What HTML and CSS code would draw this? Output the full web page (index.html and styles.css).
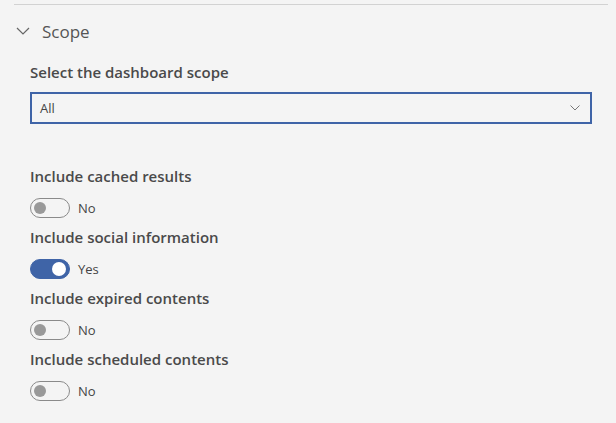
FILE: index.html
```html
<!doctype html>
<html lang="en">
    <head>
        <meta charset="UTF-8" />
        <meta name="viewport" content="width=device-width, initial-scale=1.0" />
        <title>Scope</title>
        <link rel="stylesheet" href="styles.css">
    </head>
    <body>
        <div class="divider"></div>

        <div class="section-header">
            <svg class="chevron" width="14" height="8" viewBox="0 0 14 8">
                <path d="M1 1 L7 7 L13 1" fill="none" stroke="#666" stroke-width="1.2" />
            </svg>
            <span class="section-title">Scope</span>
        </div>

        <div class="section-body">
            <label class="field-label" for="scope">Select the dashboard scope</label>
            <div class="select">
                <span class="select-value">All</span>
                <svg class="select-arrow" width="10" height="6" viewBox="0 0 10 6">
                    <path d="M0.5 0.5 L5 5 L9.5 0.5" fill="none" stroke="#777" stroke-width="1" />
                </svg>
            </div>

            <div class="toggles">
                <div class="field">
                    <div class="field-label">Include cached results</div>
                    <div class="toggle-row">
                        <span class="toggle"><span class="knob"></span></span>
                        <span class="toggle-text">No</span>
                    </div>
                </div>
                <div class="field">
                    <div class="field-label">Include social information</div>
                    <div class="toggle-row">
                        <span class="toggle on"><span class="knob"></span></span>
                        <span class="toggle-text">Yes</span>
                    </div>
                </div>
                <div class="field">
                    <div class="field-label">Include expired contents</div>
                    <div class="toggle-row">
                        <span class="toggle"><span class="knob"></span></span>
                        <span class="toggle-text">No</span>
                    </div>
                </div>
                <div class="field">
                    <div class="field-label">Include scheduled contents</div>
                    <div class="toggle-row">
                        <span class="toggle"><span class="knob"></span></span>
                        <span class="toggle-text">No</span>
                    </div>
                </div>
            </div>
        </div>
    </body>
</html>
```
FILE: styles.css
```css
body {
    margin: 0;
    background-color: #f4f4f4;
    font-family: "Open Sans", "Noto Sans", sans-serif;
    color: #444;
}
.divider {
    margin: 4px 8px 0 14px;
    border-top: 1px solid #d2d2d2;
}
.section-header {
    display: flex;
    align-items: center;
    height: 30px;
    margin-top: 11px;
    padding-left: 16px;
}
.chevron {
    margin-right: 12px;
}
.section-title {
    font-size: 17px;
    color: #555;
}
.section-body {
    padding: 0 24px 0 30px;
}
.field-label {
    display: block;
    font-size: 15px;
    font-weight: 600;
    color: #4a4a4a;
    line-height: 20px;
}
.section-body > .field-label {
    margin-top: 16px;
}
.select {
    display: flex;
    align-items: center;
    justify-content: space-between;
    height: 28px;
    margin-top: 10px;
    padding: 0 10px 0 8px;
    border: 2px solid #3f64a7;
    background-color: #f4f4f4;
}
.select-value {
    font-size: 13px;
    color: #444;
}
.toggles {
    margin-top: 42px;
}
.field {
    margin-bottom: 9px;
}
.toggle-row {
    display: flex;
    align-items: center;
    margin-top: 12px;
}
.toggle {
    position: relative;
    box-sizing: border-box;
    width: 40px;
    height: 20px;
    border: 1px solid #8a8a8a;
    border-radius: 10px;
    margin-right: 8px;
}
.knob {
    position: absolute;
    top: 3px;
    left: 3px;
    width: 12px;
    height: 12px;
    border-radius: 50%;
    background-color: #999;
}
.toggle.on {
    background-color: #3f64a7;
    border-color: #3f64a7;
}
.toggle.on .knob {
    left: auto;
    right: 3px;
    top: 2px;
    width: 14px;
    height: 14px;
    background-color: #fff;
}
.toggle-text {
    font-size: 13px;
    color: #444;
}
```
